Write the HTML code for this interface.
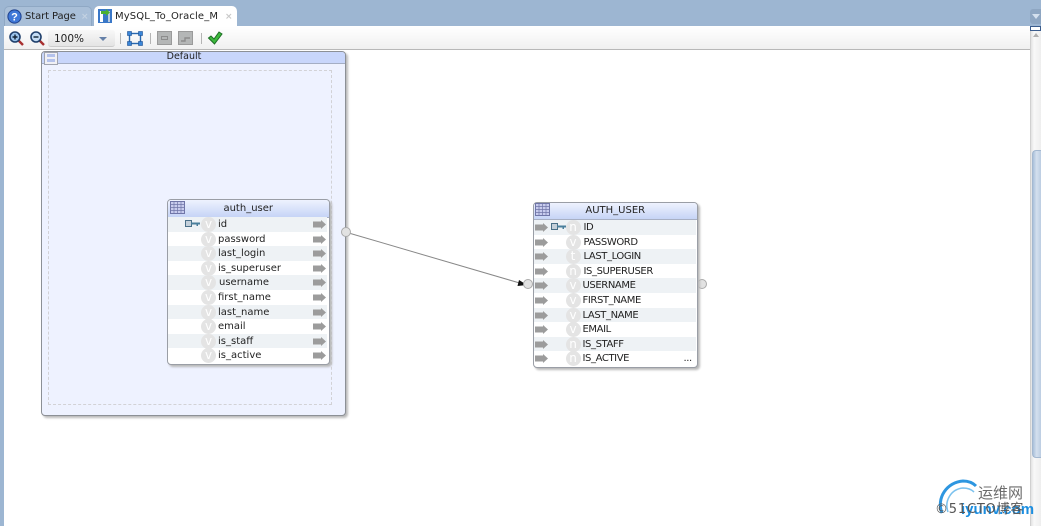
<!DOCTYPE html>
<html><head><meta charset="utf-8"><style>
*{box-sizing:border-box}
html,body{margin:0;padding:0}
body{width:1041px;height:526px;overflow:hidden;position:relative;background:#fff;font:10px "DejaVu Sans",sans-serif;color:#222;filter:blur(.3px)}
.a{position:absolute}
.tbl{position:absolute;background:#fff;border:1px solid #9a9ea6;border-radius:4px;box-shadow:2px 2px 2px #b8b8b8}
.hd{position:absolute;left:0;right:0;top:0;background:linear-gradient(#eef2fe,#c6d4f6);border-bottom:1px solid #a8b0c4;border-radius:3px 3px 0 0;text-align:center}
.r{position:absolute;height:14.6px;line-height:14.6px;white-space:nowrap}
.g{background:#eef2f5}
.c{position:absolute;width:15px;height:15px;margin-left:-1px;border-radius:8px;background:#e4e4e4;color:#fff;text-align:center;line-height:14px;font-size:12px}
.t{position:absolute;top:1px;color:#222}
#R .t{margin-left:-1px;letter-spacing:-.4px}
.ar{position:absolute;top:3px;width:13px;height:9px}
svg{display:block}
</style></head><body>
<!-- top bar -->
<div class="a" style="left:0;top:0;width:1041px;height:26px;background:#9db6d2"></div>
<div class="a" style="left:0;top:26px;width:4px;height:500px;background:#9db6d2"></div>
<!-- tabs -->
<div class="a" style="left:4px;top:6px;width:88px;height:20px;background:#a9bfd8;border-radius:5px 5px 0 0;border:1px solid #8fa8c4;border-bottom:0"></div>
<svg class="a" style="left:7px;top:9px" width="15" height="15"><circle cx="7.5" cy="7.5" r="6.6" fill="#3f78d8" stroke="#1d3f8c"/><text x="7.5" y="11.5" font-family="Liberation Sans" font-weight="700" font-size="11" fill="#fff" text-anchor="middle">?</text></svg>
<div class="a" style="left:25px;top:11px;color:#222;line-height:12px;font-size:10px;letter-spacing:-.1px">Start Page</div>
<div class="a" style="left:81px;top:11px;color:#c4d2e2;line-height:12px;font-size:9px;font-weight:700">×</div>
<div class="a" style="left:94px;top:6px;width:143px;height:21px;background:#fff;border-radius:5px 5px 0 0"></div>
<svg class="a" style="left:97px;top:8px" width="16" height="16"><rect x="1" y="1" width="14" height="14" fill="#3a78c8"/><rect x="3" y="3" width="3" height="11" fill="#fff"/><rect x="11" y="3" width="2" height="11" fill="#bcd"/><path d="M4 3h5V1l4 3.5L9 8V6H4z" fill="#4cb030"/></svg>
<div class="a" style="left:115px;top:11px;line-height:12px;font-size:10px;color:#222;letter-spacing:.12px">MySQL_To_Oracle_M</div>
<div class="a" style="left:225px;top:11px;color:#c8c8c8;line-height:12px;font-size:9px;font-weight:700">×</div>
<!-- toolbar -->
<div class="a" style="left:4px;top:26px;width:1026px;height:24px;background:linear-gradient(#fff,#f0f0f0);border-bottom:1px solid #b8b8b8"></div>
<svg class="a" style="left:8px;top:30px" width="17" height="16"><path d="M10 10l5 5" stroke="#a83030" stroke-width="2.4"/><circle cx="7" cy="7" r="5" fill="#9cc4ec" stroke="#20406c" stroke-width="1.6"/><path d="M4.5 7h5M7 4.500v5" stroke="#123" stroke-width="1.4"/></svg>
<svg class="a" style="left:29px;top:30px" width="17" height="16"><path d="M10 10l5 5" stroke="#a83030" stroke-width="2.4"/><circle cx="7" cy="7" r="5" fill="#c4dcf4" stroke="#20406c" stroke-width="1.6"/><path d="M4.5 7h5" stroke="#123" stroke-width="1.4"/></svg>
<div class="a" style="left:48px;top:30px;width:67px;height:17px;background:linear-gradient(#f8f8f8,#e4e4e4);border-radius:3px;border-bottom:1px solid #ccc"></div>
<div class="a" style="left:54px;top:33px;line-height:13px;font-size:10.500px;color:#222">100%</div>
<div class="a" style="left:99px;top:37px;width:0;height:0;border-left:4px solid transparent;border-right:4px solid transparent;border-top:4px solid #6580a8"></div>
<div class="a" style="left:120px;top:33px;width:1px;height:11px;background:#b4b4b4"></div>
<svg class="a" style="left:127px;top:31px" width="16" height="15"><rect x="2.5" y="2.5" width="11" height="10" fill="none" stroke="#2868b0" stroke-width="1.4"/><g fill="#3a86d8" stroke="#1d4f90" stroke-width=".6"><rect x="0.5" y="0.5" width="4" height="4"/><rect x="11.5" y="0.5" width="4" height="4"/><rect x="0.5" y="10.5" width="4" height="4"/><rect x="11.5" y="10.5" width="4" height="4"/></g></svg>
<div class="a" style="left:150px;top:33px;width:1px;height:11px;background:#b4b4b4"></div>
<div class="a" style="left:157px;top:31px;width:15px;height:14px;background:#b4b6b6;border:1px solid #9a9a9a"><div class="a" style="left:3px;top:4px;width:7px;height:4px;border:1px solid #8c8c8c"></div></div>
<div class="a" style="left:178px;top:31px;width:15px;height:14px;background:#b4b6b6;border:1px solid #9a9a9a"><svg class="a" style="left:1px;top:1px" width="11" height="10"><path d="M1 8h4V5h5" fill="none" stroke="#8c8c8c" stroke-width="1.4"/></svg></div>
<div class="a" style="left:201px;top:33px;width:1px;height:11px;background:#b4b4b4"></div>
<svg class="a" style="left:207px;top:30px" width="16" height="15"><path d="M1.500 8l2.500-2 3 3 5-7 3 2-7.500 10z" fill="#3cb83c" stroke="#1c6c24"/></svg>
<!-- scrollbar -->
<div class="a" style="left:1030px;top:26px;width:11px;height:500px;background:linear-gradient(90deg,#e2e2e2,#f8f8f8 30%,#eee);border-left:1px solid #d0d0d0"></div>
<div class="a" style="left:1030px;top:9px;width:11px;height:15px;background:#8ea6c2;border-radius:3px 0 0 3px"></div>
<div class="a" style="left:1032px;top:14px;width:0;height:0;border-left:4px solid transparent;border-right:4px solid transparent;border-top:5px solid #d4e0ee"></div>
<div class="a" style="left:1030px;top:26px;width:11px;height:5px;background:#fff;border:1px solid #3a5c8c"></div>
<div class="a" style="left:1033px;top:33px;width:0;height:0;border-left:3px solid transparent;border-right:3px solid transparent;border-bottom:4px solid #b0b0b0"></div>
<div class="a" style="left:1032px;top:150px;width:9px;height:308px;background:linear-gradient(90deg,#a9bfda,#d4e0ee 45%,#bccde2);border-radius:4px 0 0 4px;border:1px solid #a4b8d0;border-right:0"></div>
<!-- Default group -->
<div class="a" style="left:41px;top:51px;width:305px;height:365px;background:#eef2ff;border:1px solid #8c9096;border-radius:4px;box-shadow:2px 2px 2px #bbb"></div>
<div class="a" style="left:42px;top:52px;width:303px;height:12px;background:#c8d6fb;border-bottom:1px solid #a4aec4;border-radius:3px 3px 0 0"></div>
<div class="a" style="left:44px;top:52px;width:14px;height:13px;background:#f0f0f4;border:1px solid #a0a4b0"><div class="a" style="left:2px;top:1px;width:8px;height:3px;background:#b4c2ec"></div><div class="a" style="left:2px;top:6px;width:8px;height:3px;background:#b4c2ec"></div></div>
<div class="a" style="left:42px;top:51px;width:284px;line-height:12px;text-align:center;font-size:9.500px;color:#222">Default</div>
<div class="a" style="left:48px;top:70px;width:284px;height:335px;border:1px dashed #d2d2d6"></div>
<!-- connector -->
<svg class="a" style="left:340px;top:225px" width="195" height="66"><path d="M7 7.500L183 59" stroke="#888" stroke-width="1"/><path d="M187 60l-8-5-1.500 6z" fill="#111"/></svg>
<div class="a" style="left:341px;top:227px;width:10px;height:10px;border-radius:5px;background:#e2e2e2;border:1px solid #aaa"></div>
<div class="a" style="left:523px;top:279px;width:10px;height:10px;border-radius:5px;background:#e2e2e2;border:1px solid #aaa"></div>
<div class="a" style="left:697px;top:279px;width:10px;height:10px;border-radius:5px;background:#e2e2e2;border:1px solid #aaa"></div>
<!-- auth_user -->
<div class="tbl" style="left:167px;top:199px;width:162.500px;height:165.500px">
<div class="hd" style="height:18px;line-height:17px">auth_user</div>
<svg class="a" style="left:2px;top:1px" width="15" height="13"><rect x=".5" y=".5" width="14" height="12" fill="#c8ccee" stroke="#7076a8"/><path d="M.5 3.500h14M.5 6.500h14M.5 9.500h14M4 .5v12M7.500 .5v12M11 .5v12" stroke="#7076a8" stroke-width=".7"/></svg>
<div class="r g" style="left:0;width:159px;top:17px"><svg class="a" style="left:17px;top:3px" width="16" height="8"><rect x=".5" y=".5" width="6" height="6" fill="#c4d0da" stroke="#4a7088"/><path d="M6 2.500h9v2h-2v1.500h-1.500V4.500H6z" fill="#4a7f9c"/></svg><div class="c" style="left:34px;top:0">v</div><div class="t" style="left:50px">id</div><svg class="ar" style="left:145px" viewBox="0 0 13 9"><path d="M0 1.500h8V0l5 4.500-5 4.500V7.500H0z" fill="#9c9c9c"/></svg></div>
<div class="r" style="left:0;width:159px;top:31.600px"><div class="c" style="left:34px;top:0">v</div><div class="t" style="left:50px">password</div><svg class="ar" style="left:145px" viewBox="0 0 13 9"><path d="M0 1.500h8V0l5 4.500-5 4.500V7.500H0z" fill="#9c9c9c"/></svg></div>
<div class="r g" style="left:0;width:159px;top:46.200px"><div class="c" style="left:34px;top:0">v</div><div class="t" style="left:50px">last_login</div><svg class="ar" style="left:145px" viewBox="0 0 13 9"><path d="M0 1.500h8V0l5 4.500-5 4.500V7.500H0z" fill="#9c9c9c"/></svg></div>
<div class="r" style="left:0;width:159px;top:60.800px"><div class="c" style="left:34px;top:0">v</div><div class="t" style="left:50px">is_superuser</div><svg class="ar" style="left:145px" viewBox="0 0 13 9"><path d="M0 1.500h8V0l5 4.500-5 4.500V7.500H0z" fill="#9c9c9c"/></svg></div>
<div class="r g" style="left:0;width:159px;top:75.400px"><div class="c" style="left:34px;top:0">v</div><div class="t" style="left:51px">username</div><svg class="ar" style="left:145px" viewBox="0 0 13 9"><path d="M0 1.500h8V0l5 4.500-5 4.500V7.500H0z" fill="#9c9c9c"/></svg></div>
<div class="r" style="left:0;width:159px;top:90px"><div class="c" style="left:34px;top:0">v</div><div class="t" style="left:50px">first_name</div><svg class="ar" style="left:145px" viewBox="0 0 13 9"><path d="M0 1.500h8V0l5 4.500-5 4.500V7.500H0z" fill="#9c9c9c"/></svg></div>
<div class="r g" style="left:0;width:159px;top:104.600px"><div class="c" style="left:34px;top:0">v</div><div class="t" style="left:50px">last_name</div><svg class="ar" style="left:145px" viewBox="0 0 13 9"><path d="M0 1.500h8V0l5 4.500-5 4.500V7.500H0z" fill="#9c9c9c"/></svg></div>
<div class="r" style="left:0;width:159px;top:119.200px"><div class="c" style="left:34px;top:0">v</div><div class="t" style="left:50px">email</div><svg class="ar" style="left:145px" viewBox="0 0 13 9"><path d="M0 1.500h8V0l5 4.500-5 4.500V7.500H0z" fill="#9c9c9c"/></svg></div>
<div class="r g" style="left:0;width:159px;top:133.800px"><div class="c" style="left:34px;top:0">v</div><div class="t" style="left:50px">is_staff</div><svg class="ar" style="left:145px" viewBox="0 0 13 9"><path d="M0 1.500h8V0l5 4.500-5 4.500V7.500H0z" fill="#9c9c9c"/></svg></div>
<div class="r" style="left:0;width:159px;top:148.400px"><div class="c" style="left:34px;top:0">v</div><div class="t" style="left:50px">is_active</div><svg class="ar" style="left:145px" viewBox="0 0 13 9"><path d="M0 1.500h8V0l5 4.500-5 4.500V7.500H0z" fill="#9c9c9c"/></svg></div>
</div>
<!-- AUTH_USER -->
<div class="tbl" id="R" style="left:532.500px;top:202px;width:165.500px;height:166px">
<div class="hd" style="height:17px;line-height:16px">AUTH_USER</div>
<svg class="a" style="left:1px;top:0" width="15" height="13"><rect x=".5" y=".5" width="14" height="12" fill="#c8ccee" stroke="#7076a8"/><path d="M.5 3.500h14M.5 6.500h14M.5 9.500h14M4 .5v12M7.500 .5v12M11 .5v12" stroke="#7076a8" stroke-width=".7"/></svg>
<div class="r g" style="left:0;width:162px;top:17px"><svg class="ar" style="left:1px" viewBox="0 0 13 9"><path d="M0 1.500h8V0l5 4.500-5 4.500V7.500H0z" fill="#9c9c9c"/></svg><svg class="a" style="left:17px;top:3px" width="16" height="8"><rect x=".5" y=".5" width="6" height="6" fill="#c4d0da" stroke="#4a7088"/><path d="M6 2.500h9v2h-2v1.500h-1.500V4.500H6z" fill="#4a7f9c"/></svg><div class="c" style="left:33px;top:0">n</div><div class="t" style="left:51px">ID</div></div>
<div class="r" style="left:0;width:162px;top:31.600px"><svg class="ar" style="left:1px" viewBox="0 0 13 9"><path d="M0 1.500h8V0l5 4.500-5 4.500V7.500H0z" fill="#9c9c9c"/></svg><div class="c" style="left:33px;top:0">v</div><div class="t" style="left:51px">PASSWORD</div></div>
<div class="r g" style="left:0;width:162px;top:46.200px"><svg class="ar" style="left:1px" viewBox="0 0 13 9"><path d="M0 1.500h8V0l5 4.500-5 4.500V7.500H0z" fill="#9c9c9c"/></svg><div class="c" style="left:33px;top:0">t</div><div class="t" style="left:51px">LAST_LOGIN</div></div>
<div class="r" style="left:0;width:162px;top:60.800px"><svg class="ar" style="left:1px" viewBox="0 0 13 9"><path d="M0 1.500h8V0l5 4.500-5 4.500V7.500H0z" fill="#9c9c9c"/></svg><div class="c" style="left:33px;top:0">n</div><div class="t" style="left:51px">IS_SUPERUSER</div></div>
<div class="r g" style="left:0;width:162px;top:75.400px"><svg class="ar" style="left:1px" viewBox="0 0 13 9"><path d="M0 1.500h8V0l5 4.500-5 4.500V7.500H0z" fill="#9c9c9c"/></svg><div class="c" style="left:33px;top:0">v</div><div class="t" style="left:50px">USERNAME</div></div>
<div class="r" style="left:0;width:162px;top:90px"><svg class="ar" style="left:1px" viewBox="0 0 13 9"><path d="M0 1.500h8V0l5 4.500-5 4.500V7.500H0z" fill="#9c9c9c"/></svg><div class="c" style="left:33px;top:0">v</div><div class="t" style="left:50px">FIRST_NAME</div></div>
<div class="r g" style="left:0;width:162px;top:104.600px"><svg class="ar" style="left:1px" viewBox="0 0 13 9"><path d="M0 1.500h8V0l5 4.500-5 4.500V7.500H0z" fill="#9c9c9c"/></svg><div class="c" style="left:33px;top:0">v</div><div class="t" style="left:50px">LAST_NAME</div></div>
<div class="r" style="left:0;width:162px;top:119.200px"><svg class="ar" style="left:1px" viewBox="0 0 13 9"><path d="M0 1.500h8V0l5 4.500-5 4.500V7.500H0z" fill="#9c9c9c"/></svg><div class="c" style="left:33px;top:0">v</div><div class="t" style="left:50px">EMAIL</div></div>
<div class="r g" style="left:0;width:162px;top:133.800px"><svg class="ar" style="left:1px" viewBox="0 0 13 9"><path d="M0 1.500h8V0l5 4.500-5 4.500V7.500H0z" fill="#9c9c9c"/></svg><div class="c" style="left:33px;top:0">n</div><div class="t" style="left:50px">IS_STAFF</div></div>
<div class="r" style="left:0;width:162px;top:148.400px"><svg class="ar" style="left:1px" viewBox="0 0 13 9"><path d="M0 1.500h8V0l5 4.500-5 4.500V7.500H0z" fill="#9c9c9c"/></svg><div class="c" style="left:33px;top:0">n</div><div class="t" style="left:50px">IS_ACTIVE</div><div class="t" style="left:151px;top:1px">...</div></div>
</div>
<!-- watermark -->
<svg class="a" style="left:935px;top:476px" width="50" height="50"><path d="M7 37C1 22 12 6 28 5c5 0 9 1 13 5" fill="none" stroke="#2d96e0" stroke-width="3"/><path d="M13 36C9 25 16 13 28 12c5 0 8 1 11 4" fill="none" stroke="#7cc2ee" stroke-width="1.600"/></svg>
<div class="a" style="left:978px;top:484px;font:15px/17px 'Noto Sans CJK SC',sans-serif;color:#6c6c6c">运维网</div>
<div class="a" style="left:961px;top:501px;font:700 15px/17px 'Liberation Sans',sans-serif;color:#1c8ee0;white-space:nowrap">iyunv.com</div>
<div class="a" style="left:935px;top:502px;font:13px/15px 'DejaVu Sans','Noto Sans CJK SC',sans-serif;color:#555;letter-spacing:.8px;white-space:nowrap">©51CTO博客</div>
</body></html>
